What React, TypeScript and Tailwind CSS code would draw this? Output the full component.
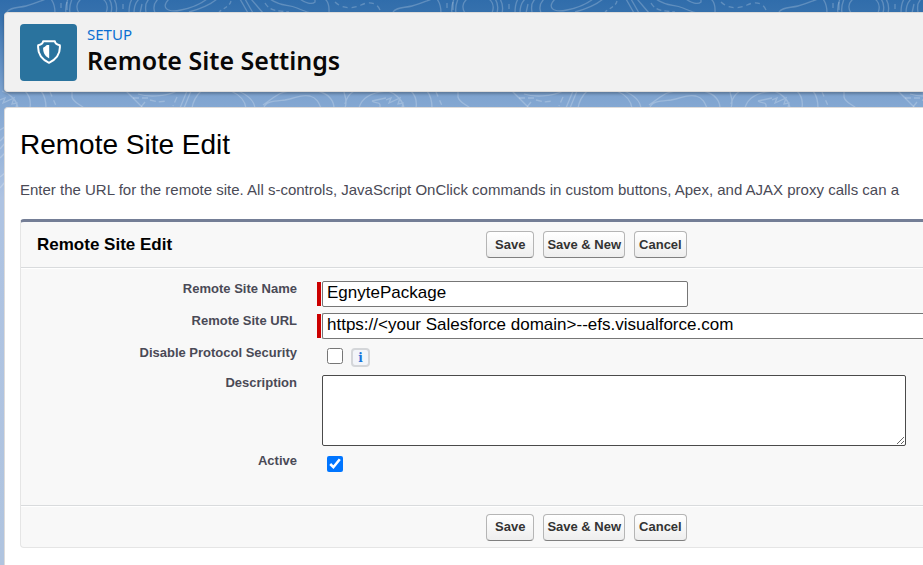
import type React from "react";

const buttons = [
	{ label: "Save", className: "px-2" },
	{ label: "Save & New", className: "px-[3px]" },
	{ label: "Cancel", className: "px-1" },
];

function TopoBackground() {
	return (
		<svg
			className="absolute inset-0 h-full w-full"
			aria-hidden="true"
			fill="none"
		>
			<defs>
				<linearGradient id="sky" x1="0" y1="0" x2="0" y2="1">
					<stop offset="0" stopColor="#306dab" />
					<stop offset="0.03" stopColor="#3872ae" />
					<stop offset="0.17" stopColor="#7fa4d0" />
					<stop offset="0.35" stopColor="#aec3e2" />
					<stop offset="1" stopColor="#b0c4df" />
				</linearGradient>
				<pattern
					id="topo"
					width="386"
					height="565"
					patternUnits="userSpaceOnUse"
				>
					<g stroke="#fff" strokeOpacity="0.22" strokeWidth="1.3">
						<path d="M7 12C10 7 18 8 26 6S40 1 46-1M51-1C54 3 55 8 55 13" />
						<path d="M61 3V8M67 2V10" />
						<path d="M68-1C66 4 65 8 66 13M72-1C70 4 69 8 70 13" />
						<path d="M81-1C76 3 76 9 79 13M103-1C108 3 108 8 106 13M109-1C113 4 112 9 111 13M114-1C117 4 117 9 116 13" />
						<path d="M123 4V9M132-1C129 4 129 8 129 13M139-1C134 4 134 9 134 13M142 4L140 13M149-1C146 2 145 7 146 12" />
						<path d="M158-1C154 3 153 8 155 13" />
						<path d="M169-1C161 7 166 13 181 10S202 3 207-1" />
						<path d="M189 12C200 9 210 5 217-1" />
						<path d="M231 1C230 6 224 8 219 12" strokeDasharray="4 3" />
						<path d="M240-1L248 13M245-1L253 13M251-1L263 13" />
						<path d="M265 3C270 12 281 11 289 12" strokeDasharray="5 3" />
						<path d="M270-1C281 7 287 4 297 8S306 12 311 13M300-1C305 3 312 5 315 2V-1M325-1C330 3 329 9 329 13" />
						<path
							d="M335 2C343 10 355 8 361 5S376 1 380 10"
							strokeDasharray="5 4"
						/>
						<path d="M0 100L5 98L3 103L14 98L12 104L17 103L16 108M2 91C11 94 17 101 18 108M25 91C30 96 31 102 30 108M41 91C45 96 46 102 46 108" />
						<path d="M50 92L57 108" strokeDasharray="5 4" />
						<path d="M72 91V97C73 102 79 104 84 108M126 91L143 108M138 94C147 97 165 97 177 91" />
						<path
							d="M133 98H148M150 100L158 102L167 101M177 97L173 106M145 102L141 107"
							strokeDasharray="6 3"
						/>
						<path d="M187 91L180 108M191 91L184 108M201 91C196 96 193 102 192 108" />
						<path d="M231 91C240 95 245 101 246 108M238 91C248 95 254 101 255 108" />
						<path d="M264 108C265 101 276 101 285 100C297 98 300 94 310 96C317 98 319 103 321 108" />
						<path d="M263 105C275 97 279 92 289 91M318 91C329 94 334 101 334 108" />
						<path d="M344 91C344 96 348 99 345 108M354 91C349 94 346 100 345 104" />
						<path d="M359 108C362 96 373 92 388 91M372 101L386 98M372 101C375 104 381 101 380 107" />
						<path d="M0 130L5 127M0 141L5 136M0 149L5 143M0 158L5 153M0 177L5 173M0 188L5 182" />
					</g>
				</pattern>
			</defs>
			<rect width="100%" height="100%" fill="url(#sky)" />
			<rect width="100%" height="100%" fill="url(#topo)" />
		</svg>
	);
}

function ShieldIcon() {
	return (
		<svg viewBox="0 0 24 24" width="24" height="24" fill="none">
			<title>Security</title>
			<path
				d="M6.2 1.2H17.8C18 2.8 19.8 4.8 22.8 5.2C23.6 13.5 20.5 18.8 12 22.8C3.5 18.8 0.4 13.5 1.2 5.2C4.2 4.8 6 2.8 6.2 1.2Z"
				stroke="#fff"
				strokeWidth="2"
				strokeLinejoin="round"
			/>
			<path
				d="M12.2 4.9V18.4C8.4 16.6 6.2 13.6 6.1 8.3C6.1 7.7 6.6 7.4 7.4 7C8.6 6.4 9.2 4.9 10.2 4.9Z"
				fill="#fff"
			/>
		</svg>
	);
}

function ButtonRow() {
	return (
		<div className="flex gap-[9px]">
			{buttons.map(({ label, className }) => (
				<button
					key={label}
					type="button"
					className={`h-[27px] rounded-[4px] border border-[#b5b5b5] border-b-[#7f7f7f] bg-linear-to-b from-white to-[#eeeeee] text-[13px] leading-4 font-bold text-[#333333] ${className}`}
				>
					{label}
				</button>
			))}
		</div>
	);
}

function Field({
	id,
	label,
	className,
	children,
}: {
	id: string;
	label: string;
	className: string;
	children: React.ReactNode;
}) {
	return (
		<div className={`flex items-start ${className}`}>
			<label
				htmlFor={id}
				className="w-[276px] shrink-0 text-right text-[13px] leading-4 font-bold text-[#4a4a56]"
			>
				{label}
			</label>
			{children}
		</div>
	);
}

function RequiredInput({
	id,
	value,
	className,
}: {
	id: string;
	value: string;
	className: string;
}) {
	return (
		<div className="ml-5 flex min-w-0 flex-1 items-center gap-px">
			<span className="h-6 w-1 shrink-0 bg-[#cc0000]" />
			<input
				id={id}
				type="text"
				required
				defaultValue={value}
				className={`h-[26px] min-w-0 rounded-[2px] border border-[#767676] bg-white px-1 pb-0.5 text-[17px] leading-5 text-black outline-none ${className}`}
			/>
		</div>
	);
}

export default function App() {
	return (
		<div className="relative min-h-screen overflow-hidden font-['Liberation_Sans',Arial,sans-serif]">
			<TopoBackground />
			<div className="relative flex min-h-screen flex-col pt-3 pl-1">
				<header className="flex h-20 items-center gap-[10px] rounded-l-[4px] border border-r-0 border-[#dddbda] bg-[#f1f1f1] pl-[15px] shadow-[0_2px_3px_rgba(0,0,0,0.25)]">
					<div className="flex size-[57px] items-center justify-center rounded-[4px] bg-[#2a739e]">
						<ShieldIcon />
					</div>
					<div className="pb-1 font-['Noto_Sans','Open_Sans',sans-serif]">
						<p className="text-[15px] leading-5 text-[#0b6fd2]">SETUP</p>
						<h1 className="text-[25px] leading-8 font-semibold text-[#080707]">
							Remote Site Settings
						</h1>
					</div>
				</header>

				<main className="mt-[15px] flex-1 rounded-tl-[4px] border-t border-l border-[#dddbda] bg-white pt-[21px] pl-[15px]">
					<h2 className="text-[28px] leading-8 text-black">Remote Site Edit</h2>
					<p className="mt-[19px] overflow-hidden text-[15px] leading-5 whitespace-nowrap text-[#4a4a56]">
						Enter the URL for the remote site. All s-controls, JavaScript OnClick
						commands in custom buttons, Apex, and AJAX proxy calls can a
					</p>

					<form className="mt-[19px] rounded-l-[4px] border border-t-[3px] border-r-0 border-[#e5e5e5] border-t-[#747e96] bg-[#f8f8f8]">
						<div className="flex h-[46px] items-center border-b border-[#d9dbdd]">
							<h3 className="w-[465px] shrink-0 pl-4 text-[17px] leading-5 font-bold text-black">
								Remote Site Edit
							</h3>
							<ButtonRow />
						</div>

						<div className="border-y border-t-white border-b-[#d9dbdd] pt-3 pb-5">
							<Field id="name" label="Remote Site Name" className="min-h-8">
								<RequiredInput
									id="name"
									value="EgnytePackage"
									className="w-[366px]"
								/>
							</Field>
							<Field id="url" label="Remote Site URL" className="min-h-8">
								<RequiredInput
									id="url"
									value="https://<your Salesforce domain>--efs.visualforce.com"
									className="flex-1 rounded-r-none border-r-0"
								/>
							</Field>
							<Field
								id="protocol"
								label="Disable Protocol Security"
								className="min-h-[30px]"
							>
								<div className="ml-[30px] flex gap-2 pt-[3px]">
									<input id="protocol" type="checkbox" className="size-4" />
									<button
										type="button"
										aria-label="Info"
										className="flex size-[19px] items-center justify-center rounded-[4px] border-2 border-[#d4d6d9] bg-[#f3f5f9] font-['DejaVu_Serif',serif] text-[12px] leading-3 font-bold text-[#1a73d9]"
									>
										i
									</button>
								</div>
							</Field>
							<Field
								id="description"
								label="Description"
								className="min-h-[78px]"
							>
								<textarea
									id="description"
									className="ml-[25px] h-[71px] w-[584px] rounded-[2px] border border-[#4a4a4a] bg-white"
								/>
							</Field>
							<Field id="active" label="Active" className="min-h-8">
								<div className="ml-[30px] pt-[3px]">
									<input
										id="active"
										type="checkbox"
										defaultChecked
										className="block size-4"
									/>
								</div>
							</Field>
						</div>

						<div className="flex h-[41px] items-center border-t border-white pl-[465px]">
							<ButtonRow />
						</div>
					</form>
				</main>
			</div>
		</div>
	);
}
